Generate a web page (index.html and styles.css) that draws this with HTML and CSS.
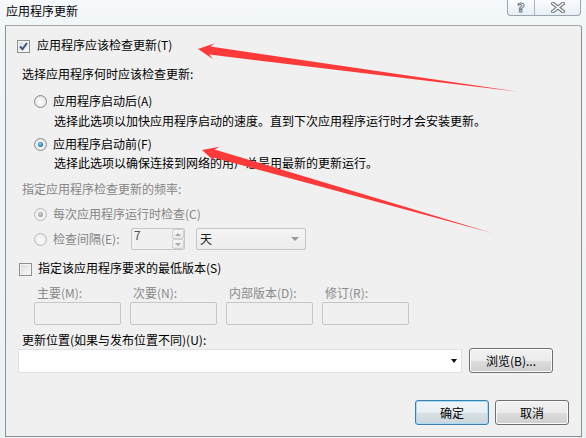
FILE: index.html
```html
<!DOCTYPE html>
<html lang="zh-CN">
<head>
<meta charset="utf-8">
<title>应用程序更新</title>
<link rel="stylesheet" href="styles.css">
</head>
<body>
<div class="window">
  <div class="titlebar">
    <span class="title">应用程序更新</span>
    <div class="caption-btns">
      <span class="cap help">?</span>
      <span class="cap close">
        <svg width="14" height="11" viewBox="0 0 14 11"><path d="M2 1.5 L12 9.5 M12 1.5 L2 9.5" stroke="#6f7882" stroke-width="3.6" stroke-linecap="square" fill="none"/><path d="M2 1.5 L12 9.5 M12 1.5 L2 9.5" stroke="#ffffff" stroke-width="1.6" stroke-linecap="square" fill="none"/></svg>
      </span>
    </div>
  </div>

  <div class="client">
    <div class="row check-row r1">
      <span class="check checked"><svg width="11" height="11" viewBox="0 0 11 11"><path d="M2 5.5 L4.5 8.2 L9 2" stroke="#42558a" stroke-width="2" fill="none"/></svg></span>
      <span>应用程序应该检查更新(T)</span>
    </div>
    <div class="heading h1">选择应用程序何时应该检查更新:</div>
    <div class="row radio-row r3"><span class="radio"></span><span>应用程序启动后(A)</span></div>
    <div class="desc d1">选择此选项以加快应用程序启动的速度。直到下次应用程序运行时才会安装更新。</div>
    <div class="row radio-row r5"><span class="radio checked"></span><span>应用程序启动前(F)</span></div>
    <div class="desc d2">选择此选项以确保连接到网络的用户总是用最新的更新运行。</div>
    <div class="heading disabled h2">指定应用程序检查更新的频率:</div>
    <div class="row radio-row disabled r8"><span class="radio checked"></span><span>每次应用程序运行时检查(C)</span></div>
    <div class="row radio-row disabled r9">
      <span class="radio"></span>
      <span class="interval-label">检查间隔(E):</span>
      <div class="spinner">
        <span class="spin-val">7</span>
        <div class="spin-btns"><span class="spin up"></span><span class="spin down"></span></div>
      </div>
      <div class="select"><span>天</span><span class="sel-arrow"></span></div>
    </div>
    <div class="row check-row r10"><span class="check"></span><span>指定该应用程序要求的最低版本(S)</span></div>
    <div class="version-grid">
      <div class="vcol"><span class="vlabel">主要(M):</span><span class="vinput"></span></div>
      <div class="vcol"><span class="vlabel">次要(N):</span><span class="vinput"></span></div>
      <div class="vcol"><span class="vlabel">内部版本(D):</span><span class="vinput"></span></div>
      <div class="vcol"><span class="vlabel">修订(R):</span><span class="vinput"></span></div>
    </div>
    <div class="heading h3">更新位置(如果与发布位置不同)(U):</div>
    <div class="location-row">
      <div class="combo"><span class="combo-arrow"></span></div>
      <button class="btn browse">浏览(B)...</button>
    </div>
    <div class="footer">
      <button class="btn default">确定</button>
      <button class="btn">取消</button>
    </div>
  </div>

  <svg class="arrows" width="586" height="438" viewBox="0 0 586 438">
    <polygon points="198,49 214.9,43.2 210.4,46.6 520,92 209.4,54.6 212.8,59" fill="#fd3a3a"/>
    <polygon points="202,150 219.6,146.7 214.6,149.5 492,233 212.4,157.2 215.2,162.1" fill="#fd3a3a"/>
  </svg>
</div>
</body>
</html>
```

FILE: styles.css
```css
* { box-sizing: border-box; }
html, body { margin: 0; padding: 0; }
body {
  width: 586px;
  height: 438px;
  overflow: hidden;
  font-family: "Noto Sans CJK SC", "Microsoft YaHei", sans-serif;
  font-size: 12px;
  color: #000;
}
.window {
  position: relative;
  width: 586px;
  height: 438px;
  background: linear-gradient(180deg, #f6f9fc 0, #f1f6f9 25px, #ebf2f6 100%);
}
.titlebar {
  height: 25px;
  display: flex;
  align-items: flex-start;
}
.title {
  padding-left: 6px;
  line-height: 22px;
}
.caption-btns {
  margin-left: auto;
  margin-right: 5px;
  display: flex;
  height: 16px;
  border: 1px solid #9aa5af;
  border-top: none;
  border-radius: 0 0 4px 4px;
  background: linear-gradient(180deg, #fbfcfe, #e7eef4);
  overflow: hidden;
}
.cap {
  display: flex;
  align-items: center;
  justify-content: center;
  height: 15px;
}
.help {
  width: 27px;
  border-right: 1px solid #a9b3bc;
  font: bold 13px "DejaVu Sans", sans-serif;
  color: #fff;
  -webkit-text-stroke: 1px #6f7882;
  line-height: 15px;
}
.close { width: 45px; }

.client {
  margin-left: 5px;
  width: 577px;
  height: 412px;
  border: 1px solid #8f8f8f;
  border-top-color: #a3a3a3;
  border-radius: 0 3px 0 0;
  background: #f0f0f0;
}

.row {
  display: flex;
  align-items: center;
  height: 16px;
  line-height: 16px;
  white-space: nowrap;
}
.heading, .desc {
  height: 16px;
  line-height: 16px;
  white-space: nowrap;
}
.heading { padding-left: 16px; }
.desc { padding-left: 48px; }
.disabled { color: #858585; }

.check {
  width: 13px;
  height: 13px;
  border: 1px solid #8e8f8f;
  background: linear-gradient(135deg, #dadada, #fbfbfb);
  box-shadow: inset 0 0 0 1px #f3f3f3;
  display: flex;
  align-items: center;
  justify-content: center;
  margin-top: 2px;
}
.check svg { display: block; }

.radio {
  position: relative;
  width: 13px;
  height: 13px;
  border-radius: 50%;
  border: 1px solid #8a8b8c;
  background: radial-gradient(circle at 50% 55%, #fdfdfd 0, #f2f2f2 40%, #d6d6d6 100%);
  flex: none;
}
.radio.checked::after {
  content: "";
  position: absolute;
  left: 3px;
  top: 3px;
  width: 5px;
  height: 5px;
  border-radius: 50%;
  background: radial-gradient(circle at 45% 40%, #8fd4f6 0, #2a80c4 55%, #123f6e 100%);
}
.disabled .radio {
  border-color: #b9b9b9;
  background: radial-gradient(circle at 50% 55%, #fbfbfb 0, #f3f3f3 45%, #e3e3e3 100%);
}
.disabled .radio.checked::after {
  background: radial-gradient(circle at 45% 40%, #d8d8d8 0, #a2a2a2 60%, #8a8a8a 100%);
}

.r1 { margin-top: 11px; padding-left: 11px; gap: 7px; }
.h1 { margin-top: 13px; }
.radio-row { padding-left: 28px; gap: 6px; }
.r3 { margin-top: 11px; }
.d1 { margin-top: 4px; }
.r5 { margin-top: 7px; }
.d2 { margin-top: 3px; }
.h2 { margin-top: 10px; }
.r8 { margin-top: 9px; }
.r9 { margin-top: 6px; height: 22px; gap: 0; }
.r9 .radio { margin-right: 6px; }
.interval-label { width: 78px; }

.spinner {
  display: flex;
  width: 54px;
  height: 22px;
  border: 1px solid #c6c6c6;
  border-radius: 2px;
  background: #f0f0f0;
}
.spin-val {
  flex: 1;
  color: #555;
  line-height: 12px;
  padding-left: 2px;
}
.spin-btns {
  width: 12px;
  display: flex;
  flex-direction: column;
}
.spin {
  flex: 1;
  position: relative;
  border: 1px solid #d0d0d0;
  border-radius: 2px;
  background: linear-gradient(180deg, #f6f6f6, #e9e9e9);
}
.spin::after {
  content: "";
  position: absolute;
  left: 2px;
  top: 3px;
  border-left: 3px solid transparent;
  border-right: 3px solid transparent;
}
.spin.up::after { border-bottom: 3px solid #a6a6a6; }
.spin.down::after { border-top: 3px solid #a6a6a6; top: 3px; }

.select {
  margin-left: 11px;
  width: 110px;
  height: 22px;
  border: 1px solid #c6c6c6;
  border-radius: 2px;
  background: linear-gradient(180deg, #f4f4f4, #ececec);
  display: flex;
  align-items: center;
  justify-content: space-between;
  padding: 0 6px 0 3px;
  color: #1e1e1e;
}
.sel-arrow {
  border-left: 4px solid transparent;
  border-right: 4px solid transparent;
  border-top: 4px solid #9a9a9a;
}

.r10 { margin-top: 10px; padding-left: 13px; gap: 6px; }

.version-grid {
  margin-top: 9px;
  padding-left: 28px;
  display: grid;
  grid-template-columns: repeat(4, 87px);
  column-gap: 9px;
}
.vcol {
  display: flex;
  flex-direction: column;
  gap: 1px;
}
.vlabel {
  height: 16px;
  line-height: 16px;
  padding-left: 3px;
  color: #8a8a8a;
  white-space: nowrap;
}
.vinput {
  height: 23px;
  border: 1px solid #c6c6c6;
  border-radius: 2px;
  background: #f0f0f0;
}

.h3 { margin-top: 7px; }

.location-row {
  display: flex;
  align-items: flex-start;
  padding-left: 12px;
  gap: 7px;
  height: 25px;
}
.combo {
  margin-top: 1px;
  width: 444px;
  height: 24px;
  border: 1px solid #dde2e8;
  background: #fff;
  display: flex;
  align-items: center;
  justify-content: flex-end;
  padding-right: 4px;
}
.combo-arrow {
  border-left: 3.5px solid transparent;
  border-right: 3.5px solid transparent;
  border-top: 4px solid #111;
}

.btn {
  font-family: inherit;
  font-size: 12px;
  color: #000;
  height: 25px;
  padding: 0;
  border: 1px solid #707070;
  border-radius: 3px;
  background: linear-gradient(180deg, #f2f2f2 0, #ebebeb 50%, #dddddd 50%, #cfcfcf 100%);
  box-shadow: inset 0 0 0 1px #fbfbfb;
  line-height: 21px;
}
.browse { width: 84px; }
.footer {
  margin-top: 27px;
  display: flex;
  justify-content: flex-end;
  padding-right: 12px;
  gap: 6px;
}
.footer .btn { width: 74px; }
.btn.default {
  border-color: #3c7fb1;
  box-shadow: inset 0 0 0 1px #a7dcf5;
  background: linear-gradient(180deg, #f0f5f8 0, #e8eef2 50%, #d9e1e6 50%, #cdd6db 100%);
}

.arrows {
  position: absolute;
  left: 0;
  top: 0;
  pointer-events: none;
}
```
